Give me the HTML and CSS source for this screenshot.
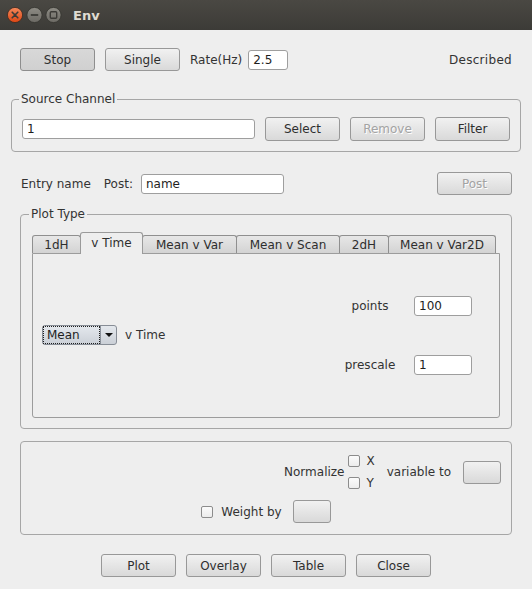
FILE: index.html
```html
<!DOCTYPE html>
<html>
<head>
<meta charset="utf-8">
<title>Env</title>
<link rel="stylesheet" href="styles.css">
</head>
<body>
<div class="window">
  <header class="titlebar">
    <svg class="wm" width="66" height="30" viewBox="0 0 66 30">
      <defs>
        <linearGradient id="gClose" x1="0" y1="0" x2="0" y2="1">
          <stop offset="0" stop-color="#f58a5c"/>
          <stop offset="1" stop-color="#dc4512"/>
        </linearGradient>
        <linearGradient id="gGray" x1="0" y1="0" x2="0" y2="1">
          <stop offset="0" stop-color="#8e8c85"/>
          <stop offset="1" stop-color="#6c6a64"/>
        </linearGradient>
      </defs>
      <circle cx="15" cy="15" r="7.6" fill="url(#gClose)" stroke="#3a2a22" stroke-width="0.8"/>
      <path d="M12.2 12.2 L17.8 17.8 M17.8 12.2 L12.2 17.8" stroke="#3c3b37" stroke-width="1.6" stroke-linecap="round"/>
      <circle cx="34.5" cy="15" r="7.6" fill="url(#gGray)" stroke="#34332f" stroke-width="0.8"/>
      <path d="M30.8 15 H38.2" stroke="#3c3b37" stroke-width="1.8"/>
      <circle cx="53.5" cy="15" r="7.6" fill="url(#gGray)" stroke="#34332f" stroke-width="0.8"/>
      <rect x="50.3" y="11.8" width="6.4" height="6.4" rx="1" fill="none" stroke="#3c3b37" stroke-width="1.4"/>
    </svg>
    <span class="title">Env</span>
  </header>

  <main class="content">
    <div class="toprow">
      <button class="btn pressed">Stop</button>
      <button class="btn">Single</button>
      <span class="rate-label">Rate(Hz)</span>
      <input class="field rate" value="2.5">
      <span class="status">Described</span>
    </div>

    <fieldset class="group source">
      <legend>Source Channel</legend>
      <div class="source-row">
        <input class="field channel" value="1">
        <button class="btn tall">Select</button>
        <button class="btn tall" disabled>Remove</button>
        <button class="btn tall">Filter</button>
      </div>
    </fieldset>

    <div class="entry">
      <span class="entry-label">Entry name</span>
      <span class="post-label">Post:</span>
      <input class="field name" value="name">
      <button class="btn post" disabled>Post</button>
    </div>

    <fieldset class="group plot">
      <legend>Plot Type</legend>
      <div class="tabbar">
        <span class="tab w1">1dH</span>
        <span class="tab active w2">v Time</span>
        <span class="tab w3">Mean v Var</span>
        <span class="tab w4">Mean v Scan</span>
        <span class="tab w5">2dH</span>
        <span class="tab w6">Mean v Var2D</span>
      </div>
      <div class="panel">
        <div class="combo">
          <span class="combo-value"><span class="focus">Mean</span></span>
          <span class="combo-arrow"><span class="tri"></span></span>
        </div>
        <span class="combo-label">v Time</span>
        <div class="params">
          <span class="param-label">points</span>
          <input class="field param" value="100">
          <span class="param-label">prescale</span>
          <input class="field param" value="1">
        </div>
      </div>
    </fieldset>

    <div class="options">
      <div class="norm-row">
        <span class="norm-label">Normalize</span>
        <div class="checks">
          <label class="chk"><input type="checkbox" class="cb"><span>X</span></label>
          <label class="chk"><input type="checkbox" class="cb"><span>Y</span></label>
        </div>
        <span class="var-label">variable to</span>
        <button class="btn small"></button>
      </div>
      <div class="weight-row">
        <label class="chk"><input type="checkbox" class="cb"><span class="weight-label">Weight by</span></label>
        <button class="btn small weight-btn"></button>
      </div>
    </div>

    <div class="actions">
      <button class="btn">Plot</button>
      <button class="btn">Overlay</button>
      <button class="btn">Table</button>
      <button class="btn">Close</button>
    </div>
  </main>
</div>
</body>
</html>
```

FILE: styles.css
```css
* {
  box-sizing: border-box;
}

html, body {
  margin: 0;
  padding: 0;
}

body {
  width: 532px;
  height: 589px;
  overflow: hidden;
  background: #eeeeee;
  font-family: "DejaVu Sans", sans-serif;
  font-size: 12px;
  color: #333333;
}

.titlebar {
  height: 30px;
  display: flex;
  align-items: center;
  background: linear-gradient(#4a4843, #3c3b37);
}

.wm {
  display: block;
  flex: none;
}

.title {
  margin-left: 7px;
  color: #dfdbd2;
  font-weight: bold;
  font-size: 13px;
}

.content {
  display: flex;
  flex-direction: column;
}

/* buttons */
.btn {
  width: 75px;
  height: 23px;
  padding: 0;
  border: 1px solid #989898;
  border-radius: 3px;
  background: linear-gradient(#f1f1f1, #d9d9d9);
  font-family: "DejaVu Sans", sans-serif;
  font-size: 12px;
  color: #2e2e2e;
  flex: none;
}

.btn.pressed {
  background: linear-gradient(#d8d8d8, #d0d0d0);
  border-color: #8e8e8e;
}

.btn:disabled {
  color: #a3a3a3;
  text-shadow: 1px 1px 0 #ffffff;
}

.btn.tall {
  height: 24px;
}

.btn.small {
  width: 38px;
}

/* text fields */
.field {
  height: 20px;
  padding: 0 0 0 4px;
  border: 1px solid #9e9e9e;
  border-radius: 3px;
  background: #ffffff;
  font-family: "DejaVu Sans", sans-serif;
  font-size: 12px;
  color: #1e1e1e;
  outline: none;
  flex: none;
}

/* row 1 */
.toprow {
  display: flex;
  align-items: center;
  height: 23px;
  margin-top: 18px;
  padding: 0 20px;
  gap: 10px;
}

.rate {
  width: 40px;
  margin-left: -4px;
}

.status {
  margin-left: auto;
  letter-spacing: 0.3px;
}

/* group boxes */
.group {
  margin: 0;
  min-width: 0;
  border: 1px solid #a6a6a6;
  border-radius: 4px;
}

.group legend {
  padding: 0 2px;
  margin-left: -3px;
  line-height: 15px;
}

.source {
  width: 510px;
  margin: 21px 0 0 11px;
  padding: 10px;
}

.source-row {
  display: flex;
  align-items: center;
  height: 24px;
  gap: 10px;
}

.channel {
  width: 233px;
}

/* entry row */
.entry {
  display: flex;
  align-items: center;
  height: 23px;
  margin-top: 20px;
  padding: 0 20px 0 21px;
}

.entry-label {
  margin-right: 13px;
}

.post-label {
  margin-right: 8px;
}

.name {
  width: 143px;
}

.post {
  margin-left: auto;
}

/* plot type */
.plot {
  width: 492px;
  margin: 12px 0 0 20px;
  padding: 10px 11px;
}

.tabbar {
  display: flex;
  align-items: flex-end;
  height: 21px;
}

.tab {
  height: 18px;
  margin-left: -1px;
  border: 1px solid #8f8f8f;
  border-bottom: none;
  border-radius: 3px 3px 0 0;
  background: linear-gradient(#e7e7e7, #d3d3d3);
  display: flex;
  align-items: center;
  justify-content: center;
  padding-top: 1px;
  color: #2e2e2e;
}

.tab.w1 { width: 49px; margin-left: 0; }
.tab.w2 { width: 63px; }
.tab.w3 { width: 95px; }
.tab.w4 { width: 104px; }
.tab.w5 { width: 50px; }
.tab.w6 { width: 108px; }

.tab.active {
  height: 22px;
  margin-bottom: -1px;
  position: relative;
  z-index: 1;
  background: #eeeeee;
  border-color: #9a9a9a;
  padding-top: 0;
  padding-bottom: 2px;
}

.panel {
  height: 165px;
  border: 1px solid #9c9c9c;
  border-radius: 0 0 3px 3px;
  display: flex;
  align-items: center;
  padding: 0 0 1px 9px;
}

.combo {
  display: flex;
  width: 75px;
  height: 20px;
  border: 1px solid #878d96;
  border-radius: 3px;
  background: linear-gradient(#e4e8ed, #cbd0d7);
  flex: none;
}

.combo-value {
  flex: 1;
  display: flex;
  padding: 0;
}

.focus {
  flex: 1;
  border: 1px dotted #1e1e1e;
  padding-left: 3px;
  line-height: 16px;
  color: #1e1e1e;
}

.combo-arrow {
  width: 16px;
  border-left: 1px solid #8a9099;
  display: flex;
  align-items: center;
  justify-content: center;
}

.tri {
  width: 0;
  height: 0;
  border-left: 4px solid transparent;
  border-right: 4px solid transparent;
  border-top: 4px solid #111111;
}

.combo-label {
  margin-left: 8px;
}

.params {
  margin-left: auto;
  margin-right: 16px;
  display: grid;
  grid-template-columns: 66px 80px;
  row-gap: 39px;
  align-items: center;
}

.param-label {
  justify-self: center;
}

.param {
  width: 58px;
  justify-self: center;
}

/* options */
.options {
  width: 492px;
  height: 94px;
  margin: 12px 0 0 20px;
  border: 1px solid #a6a6a6;
  border-radius: 4px;
  padding: 14px 10px 11px 10px;
}

.norm-row {
  display: flex;
  justify-content: flex-end;
  align-items: center;
  height: 32px;
}

.norm-label {
  margin-right: 4px;
}

.checks {
  display: flex;
  flex-direction: column;
  gap: 8px;
}

.chk {
  display: flex;
  align-items: center;
  gap: 6px;
}

.cb {
  appearance: none;
  -webkit-appearance: none;
  margin: 0;
  width: 12px;
  height: 12px;
  border: 1px solid #8c8c8c;
  border-radius: 2px;
  background: linear-gradient(#fbfbfb, #ececec);
  flex: none;
}

.var-label {
  margin: 0 12px;
}

.weight-row {
  display: flex;
  justify-content: center;
  align-items: center;
  height: 23px;
  margin-top: 12px;
}

.weight-row .chk {
  gap: 8px;
}

.weight-btn {
  margin-left: 11px;
}

/* bottom buttons */
.actions {
  display: flex;
  justify-content: center;
  gap: 10px;
  margin-top: 19px;
}
```
